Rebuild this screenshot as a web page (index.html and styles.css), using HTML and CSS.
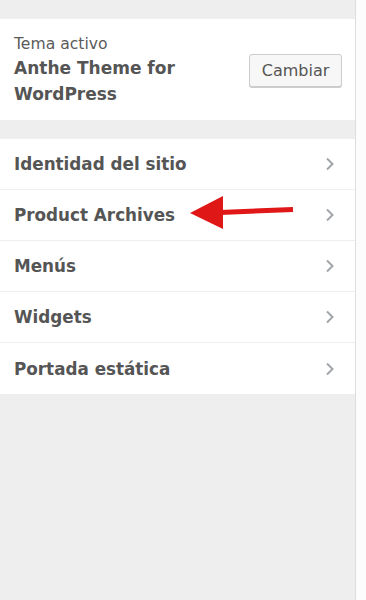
FILE: index.html
```html
<!DOCTYPE html>
<html lang="es">
<head>
    <meta charset="UTF-8">
    <title>Personalizar</title>
    <link rel="stylesheet" href="styles.css">
</head>
<body>
    <div class="layout">
        <div class="sidebar">
            <div class="theme-info">
                <div class="theme-text">
                    <div class="theme-label">Tema activo</div>
                    <div class="theme-name">Anthe Theme for WordPress</div>
                </div>
                <button class="change-btn">Cambiar</button>
            </div>

            <ul class="sections">
                <li class="section">
                    <span class="section-title">Identidad del sitio</span>
                    <svg class="chevron" width="10" height="14" viewBox="0 0 10 14"><polyline points="2,1.5 7.5,7 2,12.5" /></svg>
                </li>
                <li class="section">
                    <span class="section-title">Product Archives</span>
                    <svg class="chevron" width="10" height="14" viewBox="0 0 10 14"><polyline points="2,1.5 7.5,7 2,12.5" /></svg>
                </li>
                <li class="section">
                    <span class="section-title">Menús</span>
                    <svg class="chevron" width="10" height="14" viewBox="0 0 10 14"><polyline points="2,1.5 7.5,7 2,12.5" /></svg>
                </li>
                <li class="section">
                    <span class="section-title">Widgets</span>
                    <svg class="chevron" width="10" height="14" viewBox="0 0 10 14"><polyline points="2,1.5 7.5,7 2,12.5" /></svg>
                </li>
                <li class="section">
                    <span class="section-title">Portada estática</span>
                    <svg class="chevron" width="10" height="14" viewBox="0 0 10 14"><polyline points="2,1.5 7.5,7 2,12.5" /></svg>
                </li>
            </ul>

            <!-- annotation arrow pointing at Product Archives -->
            <svg class="annotation" width="110" height="40" viewBox="0 0 110 40">
                <line x1="30" y1="17.5" x2="103" y2="14.5" />
                <polygon points="0,18 33,1 33,34" />
            </svg>
        </div>
        <div class="preview"></div>
    </div>
</body>
</html>
```

FILE: styles.css
```css
body {
    margin: 0;
    font-family: 'DejaVu Sans', 'Noto Sans', sans-serif;
    color: #555;
    background: #fcfcfc;
}
.layout {
    display: flex;
    min-height: 600px;
}
.sidebar {
    position: relative;
    width: 355px;
    background: #eeeeee;
    border-right: 1px solid #dddddd;
    padding-top: 19px;
}
.preview {
    flex: 1;
    background: #fcfcfc;
}
.theme-info {
    display: flex;
    align-items: center;
    justify-content: space-between;
    background: #fff;
    padding: 14px 13px 13px 14px;
    margin-bottom: 19px;
}
.theme-label {
    font-size: 15.6px;
    line-height: 22px;
    color: #5a5a5a;
}
.theme-name {
    font-size: 17px;
    font-weight: bold;
    line-height: 26px;
    color: #555;
    max-width: 200px;
}
.change-btn {
    font-family: inherit;
    font-size: 16px;
    color: #555;
    width: 93px;
    height: 33px;
    background: #f7f7f7;
    border: 1px solid #cccccc;
    border-radius: 3px;
    box-shadow: 0 1px 0 #cccccc;
    padding: 0;
}
.sections {
    list-style: none;
    margin: 0;
    padding: 0;
    background: #fff;
}
.section {
    box-sizing: border-box;
    display: flex;
    align-items: center;
    justify-content: space-between;
    height: 51px;
    padding: 0 20px 0 14px;
    border-bottom: 1px solid #eeeeee;
}
.section:last-child {
    height: 52px;
}
.section-title {
    font-size: 16.8px;
    font-weight: bold;
    color: #555;
}
.chevron {
    fill: none;
    stroke: #a0a5aa;
    stroke-width: 2;
}
.annotation {
    position: absolute;
    left: 190px;
    top: 195px;
}
.annotation line {
    stroke: #e01717;
    stroke-width: 5;
}
.annotation polygon {
    fill: #e01717;
}
```
